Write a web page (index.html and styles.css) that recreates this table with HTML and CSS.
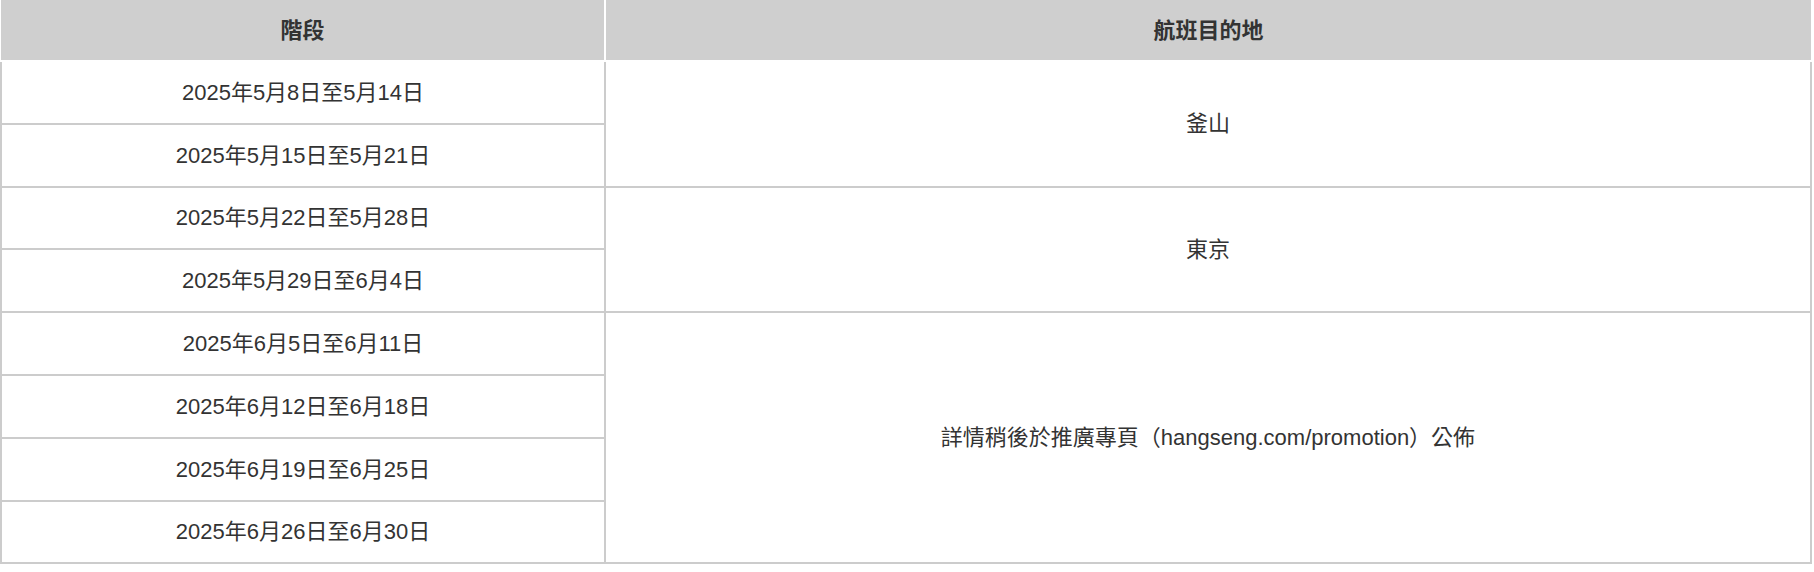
FILE: index.html
```html
<!DOCTYPE html>
<html lang="zh-Hant">
<head>
<meta charset="utf-8">
<title>航班目的地</title>
<link rel="stylesheet" href="styles.css">
</head>
<body>
<table class="schedule">
  <thead>
    <tr>
      <th class="col-stage">階段</th>
      <th class="col-dest">航班目的地</th>
    </tr>
  </thead>
  <tbody>
    <tr>
      <td>2025年5月8日至5月14日</td>
      <td rowspan="2">釜山</td>
    </tr>
    <tr>
      <td>2025年5月15日至5月21日</td>
    </tr>
    <tr>
      <td>2025年5月22日至5月28日</td>
      <td rowspan="2">東京</td>
    </tr>
    <tr>
      <td>2025年5月29日至6月4日</td>
    </tr>
    <tr>
      <td>2025年6月5日至6月11日</td>
      <td rowspan="4">詳情稍後於推廣專頁（hangseng.com/promotion）公佈</td>
    </tr>
    <tr>
      <td>2025年6月12日至6月18日</td>
    </tr>
    <tr>
      <td>2025年6月19日至6月25日</td>
    </tr>
    <tr>
      <td>2025年6月26日至6月30日</td>
    </tr>
  </tbody>
</table>
</body>
</html>
```
FILE: styles.css
```css
html, body {
  margin: 0;
  padding: 0;
  background: #ffffff;
}

.schedule {
  border-collapse: collapse;
  width: 1812px;
  table-layout: fixed;
  font-family: "Liberation Sans", Arial, "Noto Sans CJK TC", sans-serif;
  font-size: 22px;
  color: #333333;
}

.schedule th {
  background: #cfcfcf;
  height: 55px;
  padding: 0 0 5px;
  font-weight: bold;
  text-align: center;
  vertical-align: middle;
  border-right: 2px solid #ffffff;
  border-bottom: 2px solid #ffffff;
}

.schedule th:last-child {
  border-right: none;
}

.schedule .col-stage {
  width: 603px;
}

.schedule td {
  height: 55.8px;
  padding: 0 0 5px;
  text-align: center;
  vertical-align: middle;
  border: 2px solid #cccccc;
}
```
